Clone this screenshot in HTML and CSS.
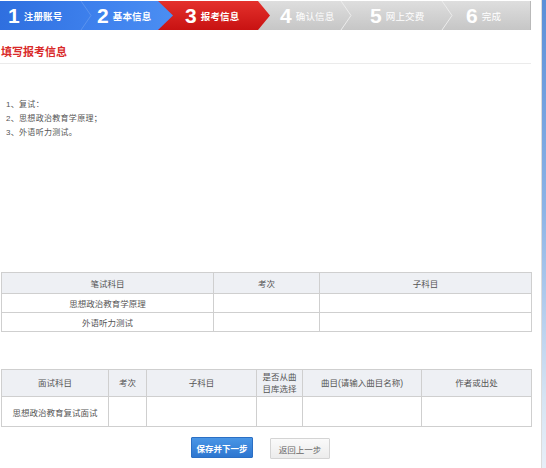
FILE: index.html
```html
<!DOCTYPE html>
<html lang="zh">
<head>
<meta charset="utf-8">
<title>填写报考信息</title>
<link rel="stylesheet" href="styles.css">
</head>
<body>
<div class="page">
  <div class="steps">
    <div class="seg seg-blue">
      <div class="step s1"><span class="num">1</span><span class="lbl">注册账号</span></div>
      <svg class="chev" width="12" height="29" viewBox="0 0 12 29"><polyline points="1,0 11,14.5 1,29" fill="none" stroke="#5b93ee" stroke-width="1"/></svg>
      <div class="step s2"><span class="num">2</span><span class="lbl">基本信息</span></div>
    </div>
    <div class="seg seg-red">
      <div class="step s3"><span class="num">3</span><span class="lbl">报考信息</span></div>
    </div>
    <div class="seg seg-gray">
      <div class="step s4"><span class="num">4</span><span class="lbl light">确认信息</span></div>
      <svg class="chev" width="12" height="29" viewBox="0 0 12 29"><polyline points="1,0 11,14.5 1,29" fill="none" stroke="#ececec" stroke-width="1"/></svg>
      <div class="step s5"><span class="num">5</span><span class="lbl light">网上交费</span></div>
      <svg class="chev" width="12" height="29" viewBox="0 0 12 29"><polyline points="1,0 11,14.5 1,29" fill="none" stroke="#ececec" stroke-width="1"/></svg>
      <div class="step s6"><span class="num">6</span><span class="lbl light">完成</span></div>
    </div>
  </div>

  <h2 class="title">填写报考信息</h2>

  <ol class="notes">
    <li>1、复试：</li>
    <li>2、思想政治教育学原理；</li>
    <li>3、外语听力测试。</li>
  </ol>

  <table class="grid g1">
    <colgroup><col class="c212"><col class="c106"><col class="c212"></colgroup>
    <thead>
      <tr><th>笔试科目</th><th>考次</th><th>子科目</th></tr>
    </thead>
    <tbody>
      <tr><td>思想政治教育学原理</td><td></td><td></td></tr>
      <tr><td>外语听力测试</td><td></td><td></td></tr>
    </tbody>
  </table>

  <table class="grid g2">
    <colgroup><col class="w107"><col class="w38"><col class="w110"><col class="w46"><col class="w119"><col class="w110"></colgroup>
    <thead>
      <tr><th>面试科目</th><th>考次</th><th>子科目</th><th class="wrap">是否从曲<br>目库选择</th><th>曲目(请输入曲目名称)</th><th>作者或出处</th></tr>
    </thead>
    <tbody>
      <tr><td>思想政治教育复试面试</td><td></td><td></td><td></td><td></td><td></td></tr>
    </tbody>
  </table>

  <div class="actions">
    <button class="btn btn-primary" type="button">保存并下一步</button>
    <button class="btn btn-default" type="button">返回上一步</button>
  </div>
</div>
<div class="rail"></div>
</body>
</html>
```

FILE: styles.css
```css
* { box-sizing: border-box; }

html, body {
  margin: 0;
  padding: 0;
  background: #ffffff;
}

body {
  display: flex;
  width: 546px;
  min-height: 468px;
  font-family: "Liberation Sans", "Noto Sans CJK SC", sans-serif;
  color: #555;
}

.page {
  width: 531px;
}

/* step bar */
.steps {
  display: flex;
  height: 29px;
  margin-top: 1px;
}

.seg {
  display: flex;
  align-items: center;
  height: 29px;
  position: relative;
}

.seg-blue {
  width: 173px;
  z-index: 3;
  background: linear-gradient(to right, #2f6fdf, #3f82ee 60%, #4b8ef2);
  clip-path: polygon(0 0, 158px 0, 173px 50%, 158px 100%, 0 100%);
}

.seg-red {
  width: 112px;
  margin-left: -15px;
  z-index: 2;
  background: linear-gradient(to bottom, #e4312c, #c81212);
  clip-path: polygon(0 0, 100px 0, 112px 50%, 100px 100%, 0 100%);
}

.seg-gray {
  flex: 1;
  margin-left: -12px;
  z-index: 1;
  background: linear-gradient(to bottom, #dedede, #c6c6c6);
  border-right: 1px solid #b9b9b9;
}

.chev { display: block; flex: none; }

.step {
  display: flex;
  align-items: center;
  height: 29px;
  color: #fff;
  flex: none;
}

.num {
  font-size: 21px;
  font-weight: bold;
  line-height: 1;
  margin-right: 4px;
}

.lbl {
  font-size: 9.5px;
  font-weight: bold;
  letter-spacing: 0.2px;
}

.lbl.light { font-weight: normal; }

.s1 { width: 80px; padding-left: 8px; }
.s2 { padding-left: 5px; }
.s3 { padding-left: 27px; }
.s4 { width: 82px; padding-left: 22px; }
.s5 { width: 89px; padding-left: 18px; }
.s6 { padding-left: 13px; }

/* title */
.title {
  margin: 14px 0 0;
  padding: 0 0 3px 1px;
  height: 20px;
  font-size: 11px;
  line-height: 16px;
  font-weight: bold;
  color: #d92a2a;
  border-bottom: 1px solid #ebebeb;
}

/* notes */
.notes {
  list-style: none;
  margin: 34px 0 0;
  padding: 0 0 0 6px;
  font-size: 8px;
  line-height: 14px;
  color: #555;
  letter-spacing: 0.3px;
}

/* tables */
.grid {
  border-collapse: collapse;
  table-layout: fixed;
  width: 530px;
  margin-left: 1px;
  font-size: 8.5px;
  color: #555;
}

.grid th, .grid td {
  border: 1px solid #cfcfcf;
  text-align: center;
  padding: 0;
  font-weight: normal;
}

.grid th {
  background: #eef0f4;
}

.g1 { margin-top: 132px; }
.g1 th { height: 21px; }
.g1 td { height: 19px; }

.c212 { width: 212px; }
.c106 { width: 106px; }

.g2 { margin-top: 37px; }
.g2 th { height: 27px; line-height: 12px; }
.g2 td { height: 30px; }

.w107 { width: 107px; }
.w38 { width: 38px; }
.w110 { width: 110px; }
.w46 { width: 46px; }
.w119 { width: 119px; }

/* actions */
.actions {
  display: flex;
  justify-content: center;
  gap: 17px;
  margin-top: 10px;
  padding-right: 10px;
}

.btn {
  font-family: "Liberation Sans", "Noto Sans CJK SC", sans-serif;
  font-size: 8.5px;
  height: 21px;
  padding: 0;
  border-radius: 1px;
  cursor: pointer;
}

.btn-primary {
  width: 62px;
  color: #fff;
  font-weight: bold;
  border: 1px solid #2b6fc4;
  background: linear-gradient(to bottom, #4996e6, #2e76d0);
}

.btn-default {
  width: 60px;
  margin-top: 1px;
  color: #666;
  border: 1px solid #d4d4d4;
  background: linear-gradient(to bottom, #fafafa, #ececec);
}

/* right rail */
.rail {
  margin-left: auto;
  width: 5px;
  border-left: 1px solid #dcdcdc;
  background: linear-gradient(to bottom, #5b8fd8, #8db4e6 45%, #d6e4f3 85%, #e8eff8);
}
```
